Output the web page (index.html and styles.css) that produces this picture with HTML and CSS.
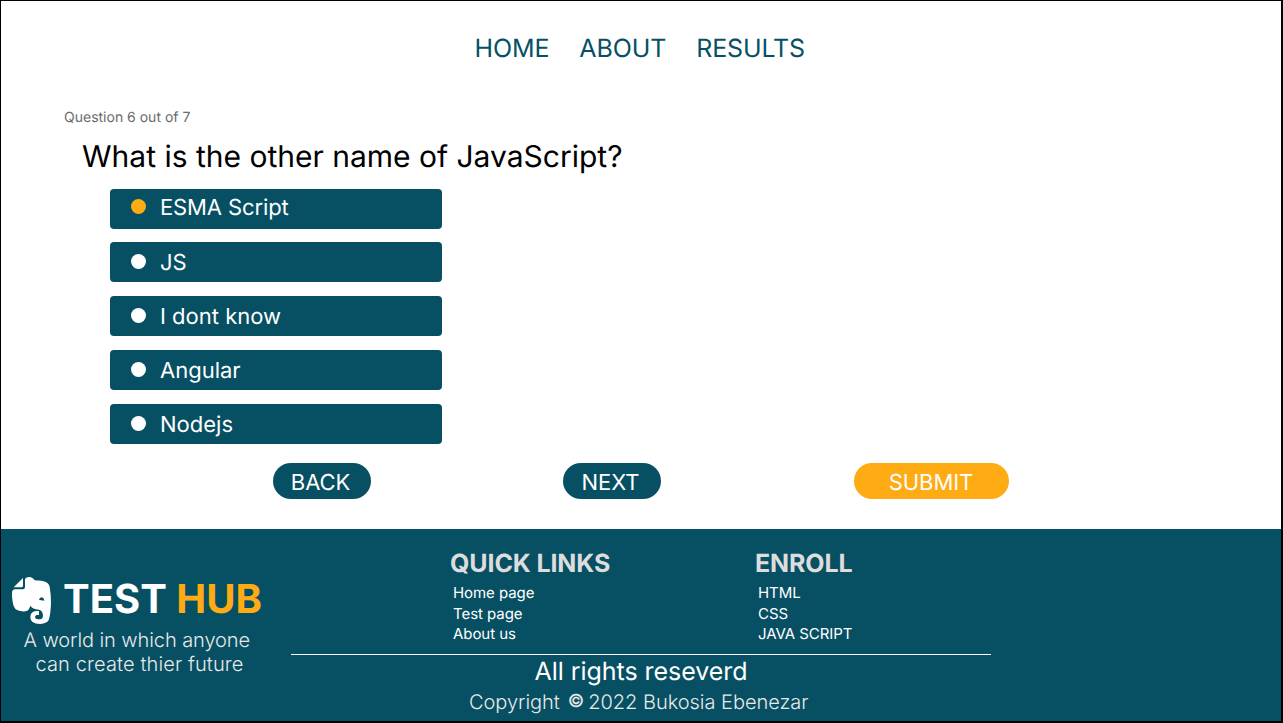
FILE: index.html
```html
<!DOCTYPE html>
<html lang="en">
<head>
<meta charset="utf-8">
<title>Test Hub</title>
<link rel="stylesheet" href="styles.css">
</head>
<body>
<div class="page">
  <nav class="nav">
    <a class="nav-home">HOME</a>
    <a class="nav-about">ABOUT</a>
    <a class="nav-results">RESULTS</a>
  </nav>
  <main class="quiz">
    <p class="counter"><span>Question 6 out of 7</span></p>
    <h1 class="question"><span>What is the other name of JavaScript?</span></h1>
    <ul class="options">
      <li class="option selected"><i class="dot"></i><span>ESMA Script</span></li>
      <li class="option"><i class="dot"></i><span>JS</span></li>
      <li class="option"><i class="dot"></i><span>I dont know</span></li>
      <li class="option"><i class="dot"></i><span>Angular</span></li>
      <li class="option"><i class="dot"></i><span>Nodejs</span></li>
    </ul>
    <div class="actions">
      <button class="btn">BACK</button>
      <button class="btn">NEXT</button>
      <button class="btn submit">SUBMIT</button>
    </div>
  </main>
  <footer class="footer">
    <div class="brand">
      <div class="logo">
        <svg class="elephant" viewBox="36 27 117 141" aria-hidden="true"><path fill="currentColor" fill-rule="evenodd" d="M69 30V53Q69 58 64 58H41ZM75 33Q78 27 87 27Q99 28 104 37L124 38Q146 41 149 56Q153 80 153 105Q152 135 147 154Q143 167 120 168Q91 168 91 148Q91 131 107 129H117V141H110Q105 142 105 147Q106 154 117 154Q129 154 129 143Q128 127 117 125Q97 123 91 113Q87 128 77 130Q58 132 47 124Q38 115 36 85V74Q37 64 46 64H66Q75 64 75 56ZM117 96Q119 87 126 88Q133 91 133 98Q124 96 117 96Z"/></svg>
        <span class="wordmark">TEST <b>HUB</b></span>
      </div>
      <p class="tagline">A world in which anyone</p>
      <p class="tagline second">can create thier future</p>
    </div>
    <div class="info">
      <div class="columns">
        <section class="column">
          <h2>QUICK LINKS</h2>
          <a>Home page</a>
          <a>Test page</a>
          <a>About us</a>
        </section>
        <section class="column">
          <h2>ENROLL</h2>
          <a>HTML</a>
          <a>CSS</a>
          <a>JAVA SCRIPT</a>
        </section>
      </div>
      <p class="rights">All rights reseverd</p>
      <p class="copyright"><span>Copyright</span><b>©</b><span>2022 Bukosia Ebenezar</span></p>
    </div>
  </footer>
</div>
</body>
</html>
```
FILE: styles.css
```css
* { box-sizing: border-box; margin: 0; padding: 0; }
body { font-family: Inter, sans-serif; font-weight: 400; background: #fff; text-rendering: geometricPrecision; }
.page {
  display: flex;
  flex-direction: column;
  width: 1283px;
  height: 723px;
  overflow: hidden;
  border: solid #000;
  border-width: 1px 2px 2px 1px;
}
.nav {
  display: flex;
  gap: 30px;
  padding: 33px 0 0 473.5px;
  font-size: 25px;
  line-height: 30px;
  letter-spacing: -0.12px;
  color: #075063;
}
.quiz { flex: 1; display: flex; flex-direction: column; }
.counter {
  margin: 44px 0 0 63px;
  font-size: 14px;
  line-height: 20px;
  color: #6b6b6b;
}
.question {
  margin: 10px 0 0 81px;
  font-size: 30px;
  font-weight: 400;
  line-height: 38px;
  color: #000;
}
.options {
  display: grid;
  gap: 14px;
  margin: 13px 0 0 109px;
  width: 332px;
  list-style: none;
}
.option {
  display: flex;
  align-items: center;
  gap: 14px;
  height: 40px;
  padding-left: 21px;
  border-radius: 4px;
  background: #075063;
  color: #fff;
  font-size: 22px;
  line-height: 40px;
}
.option.selected { padding-bottom: 4px; margin-bottom: -1px; letter-spacing: -0.12px; }
.option span { padding-top: 1px; }
.dot { width: 15px; height: 15px; border-radius: 50%; background: #fff; margin-bottom: 1px; }
.selected .dot { background: #ffab13; }
.actions { display: flex; margin: 19px 0 0 272px; }
.btn {
  width: 98px;
  height: 36px;
  margin-right: 192px;
  padding: 3px 3px 0 0;
  border: 0;
  border-radius: 18px;
  background: #075063;
  color: #fff;
  font: 400 22px/35px Inter, sans-serif;
  letter-spacing: -0.08px;
  text-rendering: inherit;
}
.btn.submit { width: 155px; margin: 0 0 0 1px; padding-right: 1px; background: #ffab13; }
.footer { display: flex; height: 192px; background: #075063; color: #fff; }
.brand { width: 290px; padding: 48px 0 0 11px; }
.logo { display: flex; height: 47px; }
.elephant { width: 39px; height: 47px; }
.wordmark { margin-left: 12px; font-size: 40px; font-weight: 700; line-height: 44px; }
.wordmark b { font-weight: 700; color: #ffab13; }
.tagline { margin-left: 11.5px; padding-top: 4px; font-size: 20px; font-weight: 300; line-height: 24px; letter-spacing: -0.08px; color: #e9e9e9; }
.tagline.second { margin-left: 23.5px; padding-top: 0; letter-spacing: 0.12px; }
.info { width: 700px; }
.columns { display: flex; height: 126px; padding: 20px 0 0 159px; border-bottom: 1px solid #fff; }
.column { flex: 0 0 305px; }
.column h2 { font-size: 25px; font-weight: 700; line-height: 30px; letter-spacing: -0.12px; color: #ddd; padding-bottom: 4px; }
.column a { display: block; padding-left: 3px; font-size: 15px; line-height: 20.5px; letter-spacing: -0.06px; }
.rights { padding-top: 1px; font-size: 25px; line-height: 32px; letter-spacing: -0.04px; text-align: center; }
.copyright { display: flex; padding: 1px 0 0 178px; font-size: 20px; font-weight: 300; line-height: 26px; letter-spacing: -0.03px; color: #e9e9e9; }
.copyright b { width: 17px; margin: 0 3.5px 0 8px; font-size: 18px; font-weight: 500; }
```
